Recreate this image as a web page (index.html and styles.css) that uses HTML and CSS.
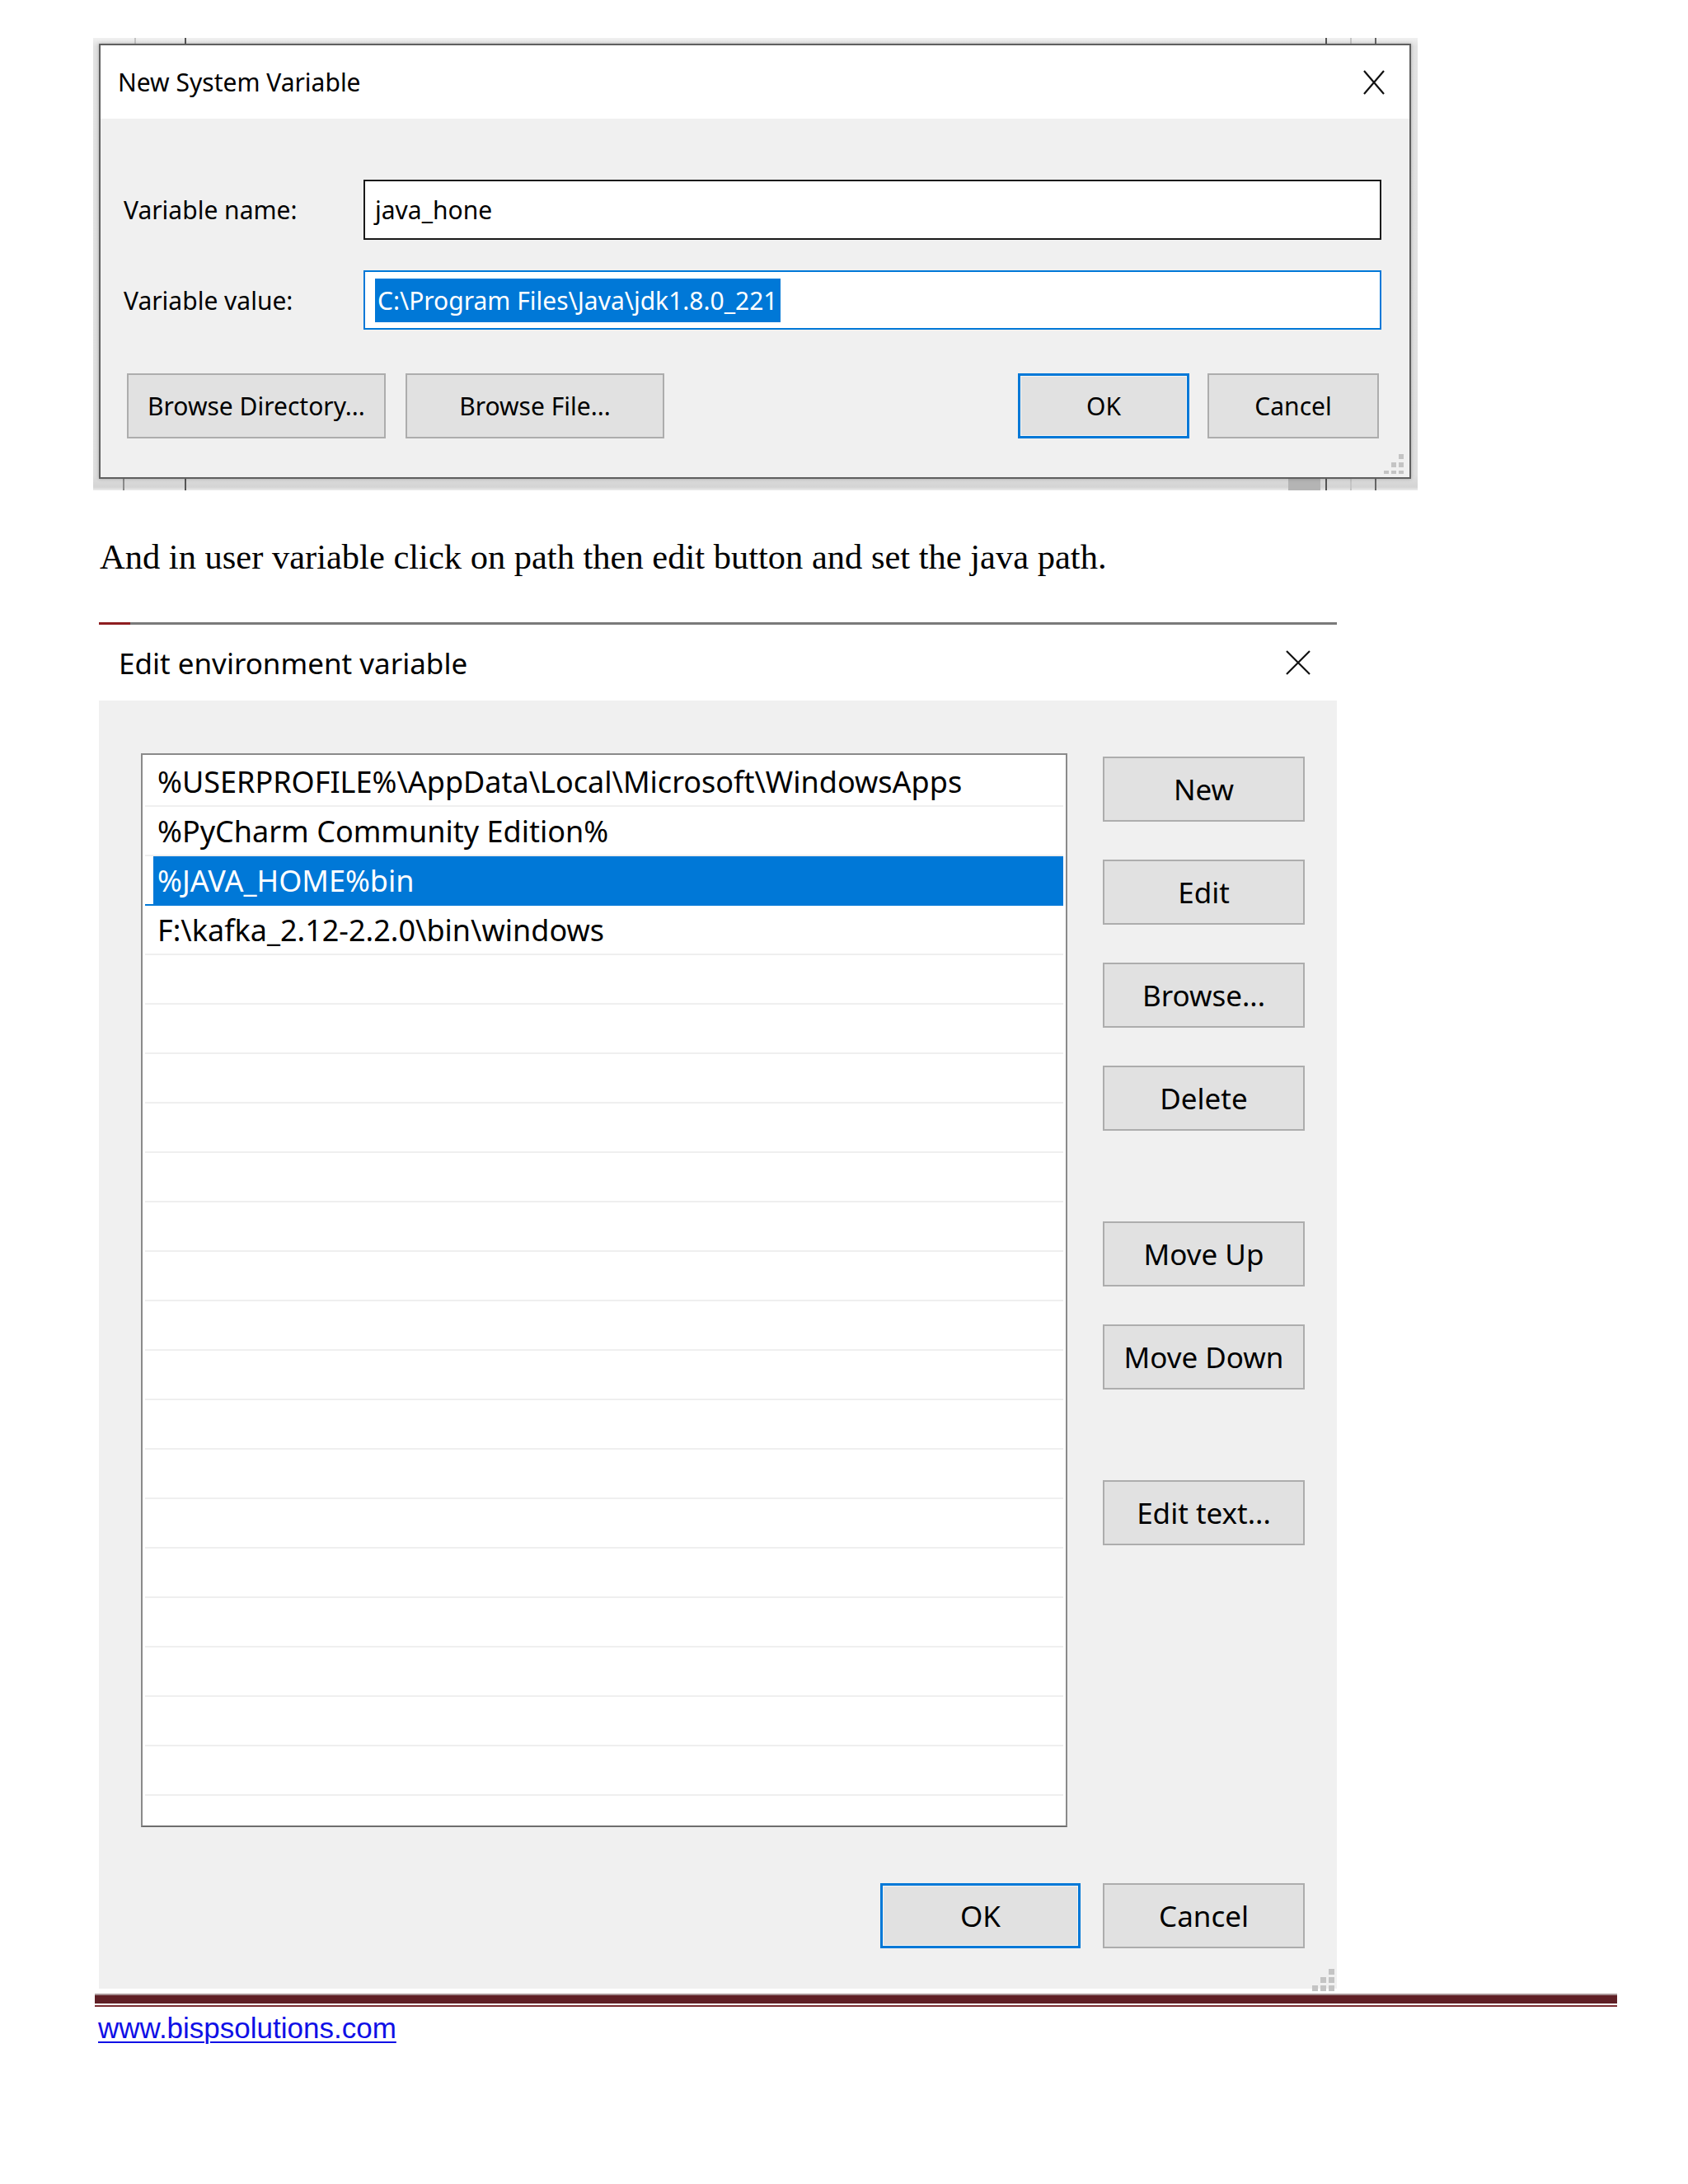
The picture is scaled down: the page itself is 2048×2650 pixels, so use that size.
FILE: index.html
```html
<!DOCTYPE html>
<html>
<head>
<meta charset="utf-8">
<link rel="stylesheet" href="styles.css">
</head>
<body>
<div class="doc">
  <div class="shot1">
    <div class="dlg1">
      <div class="d1-title">
        <span class="d1-title-text">New System Variable</span>
        <svg class="d1-close" viewBox="0 0 26 30" width="26" height="30"><path d="M1 1 L25 29 M25 1 L1 29" stroke="#111" stroke-width="2.2" fill="none"/></svg>
      </div>
      <div class="d1-body">
        <div class="d1-row">
          <div class="d1-label">Variable name:</div>
          <div class="d1-input">java_hone</div>
        </div>
        <div class="d1-row d1-row2">
          <div class="d1-label">Variable value:</div>
          <div class="d1-input d1-focus"><span class="d1-sel">C:\Program Files\Java\jdk1.8.0_221</span></div>
        </div>
        <div class="d1-buttons">
          <div class="btn d1-btn d1-wide">Browse Directory...</div>
          <div class="btn d1-btn d1-wide">Browse File...</div>
          <div class="d1-spacer"></div>
          <div class="btn d1-btn d1-narrow btn-default">OK</div>
          <div class="btn d1-btn d1-narrow">Cancel</div>
        </div>
        <svg class="grip grip1" width="24" height="24" viewBox="0 0 24 24"><g fill="#c4c4c4"><rect x="18" y="0" width="6" height="6"/><rect x="9" y="10" width="6" height="6"/><rect x="18" y="10" width="6" height="6"/><rect x="0" y="20" width="6" height="6"/><rect x="9" y="20" width="6" height="6"/><rect x="18" y="20" width="6" height="6"/></g></svg>
      </div>
    </div>
  </div>

  <p class="para">And in user variable click on path then edit button and set the java path.</p>

  <div class="dlg2">
    <div class="d2-topline"></div>
    <div class="d2-title">
      <span>Edit environment variable</span>
      <svg class="d2-close" viewBox="0 0 30 30" width="30" height="30"><path d="M1 1 L29 29 M29 1 L1 29" stroke="#111" stroke-width="2.2" fill="none"/></svg>
    </div>
    <div class="d2-body">
      <div class="d2-main">
        <div class="d2-list">
          <div class="d2-item">%USERPROFILE%\AppData\Local\Microsoft\WindowsApps</div>
          <div class="d2-item">%PyCharm Community Edition%</div>
          <div class="d2-item d2-selected">%JAVA_HOME%bin</div>
          <div class="d2-item">F:\kafka_2.12-2.2.0\bin\windows</div>
          <div class="d2-item"></div>
          <div class="d2-item"></div>
          <div class="d2-item"></div>
          <div class="d2-item"></div>
          <div class="d2-item"></div>
          <div class="d2-item"></div>
          <div class="d2-item"></div>
          <div class="d2-item"></div>
          <div class="d2-item"></div>
          <div class="d2-item"></div>
          <div class="d2-item"></div>
          <div class="d2-item"></div>
          <div class="d2-item"></div>
          <div class="d2-item"></div>
          <div class="d2-item"></div>
          <div class="d2-item"></div>
          <div class="d2-item"></div>
          <div class="d2-item"></div>
        </div>
        <div class="d2-side">
          <div class="btn d2-btn">New</div>
          <div class="btn d2-btn">Edit</div>
          <div class="btn d2-btn">Browse...</div>
          <div class="btn d2-btn">Delete</div>
          <div class="btn d2-btn d2-gap">Move Up</div>
          <div class="btn d2-btn">Move Down</div>
          <div class="btn d2-btn d2-gap">Edit text...</div>
        </div>
      </div>
      <div class="d2-footer">
        <div class="btn d2-btn d2-ok btn-default">OK</div>
        <div class="btn d2-btn">Cancel</div>
      </div>
      <svg class="grip grip2" width="27" height="27" viewBox="0 0 27 27"><g fill="#c4c4c4"><rect x="20" y="0" width="7" height="7"/><rect x="10" y="10" width="7" height="7"/><rect x="20" y="10" width="7" height="7"/><rect x="0" y="20" width="7" height="7"/><rect x="10" y="20" width="7" height="7"/><rect x="20" y="20" width="7" height="7"/></g></svg>
    </div>
  </div>

  <div class="bar"></div>
  <div class="bar-thin"></div>
  <a class="link" href="#">www.bispsolutions.com</a>
</div>
</body>
</html>
```

FILE: styles.css
```css
* { box-sizing: border-box; }
html, body { margin: 0; padding: 0; background: #ffffff; }
body { font-family: "Noto Sans", "Open Sans", sans-serif; color: #000; }
.doc { width: 2048px; min-height: 2650px; padding-top: 46px; }

/* ---------- screenshot 1 ---------- */
.shot1 {
  margin-left: 113px;
  width: 1607px;
  height: 549px;
  padding: 7px 8px 14px 7px;
  background:
    linear-gradient(to right, transparent 1450px, #b4b4b4 1450px, #b4b4b4 1489px, transparent 1489px) left bottom / 100% 14px no-repeat,
    linear-gradient(to right, transparent 36px, #8a8a8a 36px, #8a8a8a 38px, transparent 38px) left bottom / 100% 14px no-repeat,
    linear-gradient(to right, transparent 50px, #c4c4c4 50px, #c4c4c4 52px, transparent 52px) left top / 100% 7px no-repeat,
    linear-gradient(to right, transparent 111px, #555 111px, #555 113px, transparent 113px),
    linear-gradient(to right, transparent 1495px, #555 1495px, #555 1497px, transparent 1497px),
    linear-gradient(to right, transparent 1525px, #c4c4c4 1525px, #c4c4c4 1527px, transparent 1527px),
    linear-gradient(to right, transparent 1555px, #666 1555px, #666 1557px, transparent 1557px),
    linear-gradient(to bottom, #f0f0f0, #e2e2e2 10px, #dedede 530px, #d4d4d4 545px, #ececec);
}
.dlg1 {
  position: relative;
  width: 1592px;
  height: 528px;
  border: 2px solid #5f5f5f;
  background: #f0f0f0;
  display: flex;
  flex-direction: column;
  box-shadow: 0 0 4px rgba(0,0,0,0.25);
}
.d1-title {
  height: 89px;
  background: #ffffff;
  display: flex;
  align-items: center;
  justify-content: space-between;
  padding: 0 30px 0 21px;
  font-size: 30px;
  flex: none;
}
.d1-close { display: block; }
.d1-body {
  position: relative;
  flex: 1;
  background: #f0f0f0;
  padding: 74px 34px 0 28px;
  font-size: 30px;
}
.d1-row { display: flex; align-items: center; height: 73px; }
.d1-row2 { margin-top: 37px; height: 72px; }
.d1-label { width: 291px; flex: none; }
.d1-input {
  flex: 1;
  height: 100%;
  background: #fff;
  border: 2px solid #1a1a1a;
  padding-left: 12px;
  display: flex;
  align-items: center;
  white-space: nowrap;
}
.d1-focus { border-color: #0078d7; }
.d1-sel {
  display: inline-block;
  height: 53px;
  line-height: 53px;
  background: #0078d7;
  color: #fff;
  padding: 0 3px;
}
.d1-buttons {
  display: flex;
  margin-top: 53px;
  padding-left: 4px;
  padding-right: 3px;
}
.btn {
  background: #e1e1e1;
  border: 2px solid #adadad;
  display: flex;
  align-items: center;
  justify-content: center;
  white-space: nowrap;
  color: #000;
}
.btn-default { border: 3px solid #0078d7; box-shadow: inset 0 0 0 1px #f4f4f4; }
.d1-btn { height: 79px; font-size: 30px; }
.d1-wide { width: 314px; margin-right: 24px; }
.d1-wide + .d1-spacer { margin-left: -24px; }
.d1-spacer { flex: 1; }
.d1-narrow { width: 208px; }
.d1-narrow + .d1-narrow { margin-left: 22px; }
.grip { position: absolute; display: block; }
.grip1 { right: 7px; bottom: 4px; }

/* ---------- paragraph ---------- */
.para {
  margin: 57px 0 0 121px;
  font-family: "Liberation Serif", "Times New Roman", serif;
  font-size: 42.5px;
  line-height: 48px;
  color: #000;
}

/* ---------- dialog 2 ---------- */
.dlg2 { margin: 55px 0 0 120px; width: 1502px; }
.d2-topline {
  height: 3px;
  background: linear-gradient(to right, #8e1d20 0, #8e1d20 38px, #7a7a7a 38px);
}
.d2-title {
  height: 92px;
  background: #fff;
  display: flex;
  align-items: center;
  justify-content: space-between;
  padding: 0 32px 0 24px;
  font-size: 35px;
}
.d2-close { display: block; }
.d2-body {
  position: relative;
  background: #f0f0f0;
  height: 1563px;
  padding: 64px 39px 0 51px;
  font-size: 35px;
}
.d2-main { display: flex; align-items: flex-start; }
.d2-list {
  width: 1124px;
  height: 1303px;
  background: #fff;
  border: 2px solid #8a8a8a;
  border-bottom-color: #6e6e6e;
  padding: 3px 3px 0 3px;
  overflow: hidden;
  flex: none;
  font-size: 36px;
}
.d2-item {
  height: 60px;
  border-bottom: 2px solid #efefef;
  padding-left: 15px;
  display: flex;
  align-items: center;
  white-space: nowrap;
}
.d2-selected {
  background: linear-gradient(to right, transparent 10px, #0078d7 10px);
  color: #fff;
  border-bottom-color: #0078d7;
}
.d2-side {
  margin-left: 43px;
  width: 245px;
  padding-top: 4px;
  display: flex;
  flex-direction: column;
  gap: 46px;
}
.d2-btn { width: 245px; height: 79px; font-size: 35px; }
.d2-side .d2-gap { margin-top: 64px; }
.d2-footer {
  display: flex;
  justify-content: flex-end;
  gap: 27px;
  margin-top: 68px;
}
.d2-ok { width: 243px; }
.grip2 { right: 3px; bottom: -3px; }

/* ---------- footer ---------- */
.bar {
  margin: 6px 0 0 115px;
  width: 1847px;
  height: 12px;
  background: #5f1f25;
  border-top: 2px solid #a89495;
}
.bar-thin {
  margin: 2px 0 0 115px;
  width: 1847px;
  height: 2px;
  background: #7b2d31;
}
.link {
  display: inline-block;
  margin: 6px 0 0 119px;
  font-family: "Liberation Sans", Arial, sans-serif;
  font-size: 35px;
  line-height: 40px;
  color: #1010e6;
  text-decoration: underline;
  text-decoration-thickness: 2px;
  text-underline-offset: 4px;
}
```
